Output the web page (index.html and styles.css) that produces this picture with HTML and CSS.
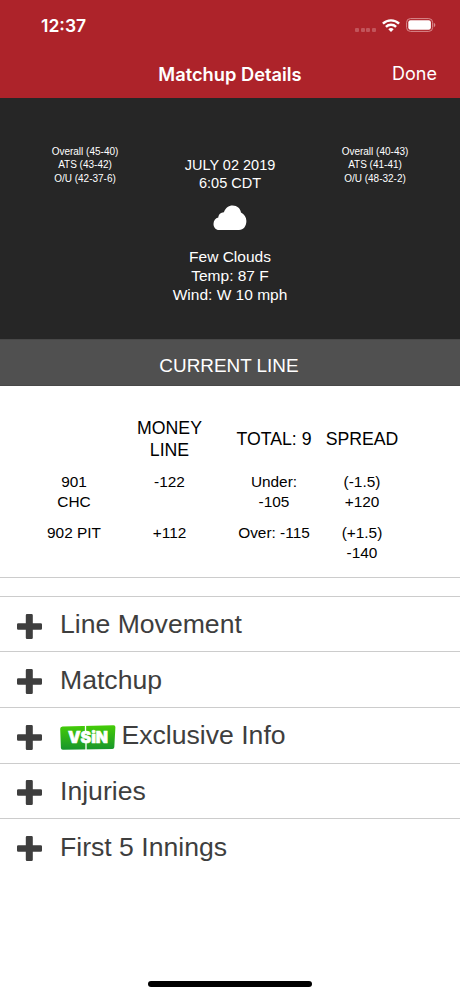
FILE: index.html
```html
<!DOCTYPE html>
<html lang="en">
<head>
<meta charset="utf-8">
<title>Matchup Details</title>
<link rel="stylesheet" href="styles.css">
</head>
<body>
<svg class="defs" width="0" height="0" aria-hidden="true">
  <symbol id="plus" viewBox="0 0 25 25"><path d="M10 0h4.600a1.200 1.200 0 0 1 1.200 1.200v8.100h8a1.200 1.200 0 0 1 1.200 1.200v4a1.200 1.200 0 0 1-1.200 1.200h-8v8.100a1.200 1.200 0 0 1-1.200 1.200H10a1.200 1.200 0 0 1-1.200-1.200v-8.100H1.200A1.200 1.200 0 0 1 0 14.500v-4a1.200 1.200 0 0 1 1.200-1.200h7.600V1.200A1.200 1.200 0 0 1 10 0z"/></symbol>
</svg>
<header class="top">
  <div class="status">
    <span class="time">12:37</span>
    <span class="signal"><i></i><i></i><i></i><i></i></span>
    <svg class="wifi" viewBox="0 0 18 13"><g fill="none" stroke="#fff" stroke-width="2.400"><path d="M.9 4.700a11.600 11.600 0 0 1 16.200 0"/><path d="M3.900 7.900a7.300 7.300 0 0 1 10.200 0"/></g><path fill="#fff" d="M9 13 6.300 10.200a3.900 3.900 0 0 1 5.400 0z"/></svg>
    <svg class="battery" viewBox="0 0 30 14"><rect x=".6" y=".6" width="26" height="12.800" rx="3.800" fill="none" stroke="#d98a8d"/><rect x="2.300" y="2.300" width="22.600" height="9.400" rx="2.200" fill="#fff"/><path fill="#d98a8d" d="M27.800 4.700q1.600.8 1.600 2.300t-1.600 2.300z"/></svg>
  </div>
  <div class="nav">
    <span></span>
    <h1>Matchup Details</h1>
    <span class="done">Done</span>
  </div>
</header>
<section class="game">
  <div class="record">Overall (45-40)<br>ATS (43-42)<br>O/U (42-37-6)</div>
  <div class="conditions">
    <div class="date">JULY 02 2019<br>6:05 CDT</div>
    <svg class="cloud" viewBox="0 0 34 26"><path fill="#fff" d="M6 25C2.700 25 .5 22.300.5 19c0-3.100 1.900-5.700 4.800-6.400C5.500 9.500 7.700 7.400 10.900 7.300 12.300 3.300 15.600.6 19.600.6c4.600 0 7.800 3 8.400 7 3.200 1.600 5.400 4.700 5.400 8.400 0 5-2.900 9-7.400 9z"/></svg>
    <div class="weather">Few Clouds<br>Temp: 87 F<br>Wind: W 10 mph</div>
  </div>
  <div class="record">Overall (40-43)<br>ATS (41-41)<br>O/U (48-32-2)</div>
</section>
<h2 class="bar">CURRENT LINE</h2>
<section class="odds">
  <div class="row heads"><span></span><span>MONEY<br>LINE</span><span>TOTAL: 9</span><span>SPREAD</span></div>
  <div class="row"><span>901<br>CHC</span><span>-122</span><span>Under:<br>-105</span><span>(-1.5)<br>+120</span></div>
  <div class="row"><span>902 PIT</span><span>+112</span><span>Over: -115</span><span>(+1.5)<br>-140</span></div>
</section>
<ul class="panels">
  <li><svg class="plus"><use href="#plus"/></svg><span>Line Movement</span></li>
  <li><svg class="plus"><use href="#plus"/></svg><span>Matchup</span></li>
  <li><svg class="plus"><use href="#plus"/></svg>
    <svg class="vsin" viewBox="0 0 56 25"><defs><linearGradient id="green" x1="0" y1="0" x2="0" y2="1"><stop offset="0" stop-color="#45cd06"/><stop offset="1" stop-color="#17952c"/></linearGradient></defs><path fill="url(#green)" d="M2.500 1.400 53.500.2Q55.600.2 55.400 2.200L54.300 22.200Q54.200 24 52.300 24L2.800 24.800Q1 24.800.9 23L.2 3.800Q.2 1.500 2.500 1.400z"/><path d="M25.500 0v6.500M26 18V25" stroke="#fff" stroke-width="1.300"/><text x="8" y="18" textLength="40" lengthAdjust="spacingAndGlyphs">VSiN</text></svg>
    <span>Exclusive Info</span></li>
  <li><svg class="plus"><use href="#plus"/></svg><span>Injuries</span></li>
  <li><svg class="plus"><use href="#plus"/></svg><span>First 5 Innings</span></li>
</ul>
<footer class="home"><div></div></footer>
</body>
</html>
```
FILE: styles.css
```css
* { box-sizing: border-box; }
body {
  margin: 0;
  width: 460px;
  height: 996px;
  display: flex;
  flex-direction: column;
  overflow: hidden;
  background: #fff;
  color: #000;
  font-family: "Liberation Sans", Arial, sans-serif;
}
.defs { position: absolute; }
.top {
  height: 98px;
  background: #ad232a;
  color: #fff;
  font-family: Inter, sans-serif;
}
.status { display: flex; height: 50px; padding: 0 24px 0 41px; }
.time { flex: 1; padding-top: 15px; font-size: 17.500px; line-height: 22px; font-weight: 600; }
.signal { display: flex; gap: 1.700px; padding-top: 28px; margin-right: 6px; }
.signal i { width: 4px; height: 4px; border-radius: 1px; background: #c2545a; }
.wifi { width: 18px; height: 13px; margin: 18.500px 6px 0 0; }
.battery { width: 30px; height: 14px; margin-top: 18px; }
.nav {
  display: grid;
  grid-template-columns: 1fr auto 1fr;
  padding: 0 23px;
  line-height: 48px;
}
.nav h1 { margin: 0; font-size: 18.300px; font-weight: 600; }
.done { text-align: right; font-size: 18px; }
.game {
  display: grid;
  grid-template-columns: 170px 120px 170px;
  height: 241px;
  background: #262626;
  color: #fff;
  text-align: center;
}
.record { padding-top: 47px; font-size: 10px; line-height: 13.330px; }
.conditions { padding-top: 58px; }
.date { font-size: 14.500px; line-height: 18px; }
.cloud { display: block; width: 34px; height: 26px; margin: 13px auto 15.500px; }
.weather { font-size: 15.500px; line-height: 19px; white-space: nowrap; }
.bar {
  margin: 0;
  height: 46.500px;
  padding: 4px 2px 0 0;
  background: #505050;
  border-top: 1px solid #484848;
  border-bottom: 1px solid #484848;
  color: #fff;
  font-size: 18.900px;
  font-weight: 400;
  line-height: 44px;
  text-align: center;
}
.odds {
  height: 192.500px;
  padding: 31px 0 0 32px;
  border-bottom: 1px solid #ccc;
  text-align: center;
  font-size: 15.400px;
  line-height: 20px;
}
.row {
  display: grid;
  grid-template-columns: 84px 107px 102px 74px;
  margin-bottom: 11px;
  white-space: nowrap;
}
.heads { align-items: center; margin-bottom: 10.500px; font-size: 17.700px; line-height: 22.300px; }
.panels { list-style: none; margin: 17.900px 0 0; padding: 0; }
.panels li {
  display: flex;
  align-items: center;
  height: 55.600px;
  padding-left: 17px;
  border-top: 1px solid #ccc;
  color: #3e3e3e;
  font-size: 26.600px;
  line-height: 54px;
}
.plus { width: 25px; height: 25px; margin: 4px 18px 0 0; fill: #3e3e3e; }
.vsin { width: 56px; height: 25px; margin: 4px 5.500px 0 0; }
.vsin text {
  fill: #fff;
  stroke: #fff;
  stroke-width: .6px;
  font: 900 16px Inter, sans-serif;
}
.home { margin-top: auto; padding-bottom: 9px; }
.home div { width: 164px; height: 6px; margin: 0 auto; border-radius: 3px; background: #000; }
```
